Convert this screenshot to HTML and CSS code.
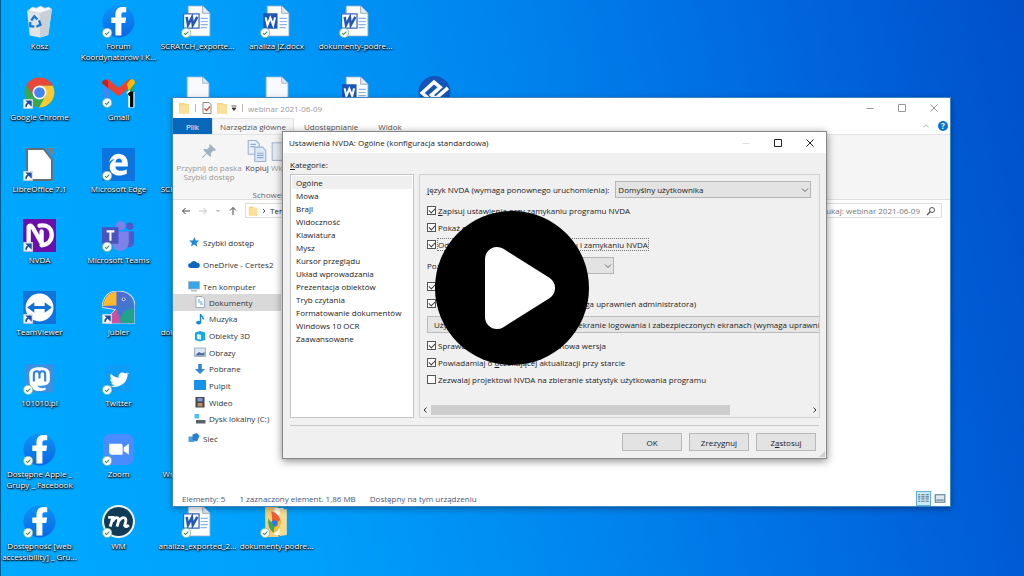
FILE: index.html
```html
<!DOCTYPE html>
<html lang="pl">
<head>
<meta charset="utf-8">
<title>webinar 2021-06-09</title>
<link rel="stylesheet" href="styles.css">
</head>
<body>
<svg class="defs" aria-hidden="true">
  <defs>
    <linearGradient id="g-fb" x1="0" y1="0" x2="0" y2="1"><stop offset="0" stop-color="#0a93f8"/><stop offset="1" stop-color="#0a68e6"/></linearGradient>
    <linearGradient id="g-parrot" x1="0" y1="0" x2="1" y2="1"><stop offset="0" stop-color="#5b62d8"/><stop offset="1" stop-color="#2f86c8"/></linearGradient>
    <symbol id="ok" viewBox="0 0 10 10"><circle cx="5" cy="5" r="4.5" fill="#fff" stroke="#7db98c" stroke-width=".8"/><path d="M3 5.2l1.4 1.4L7.1 3.8" fill="none" stroke="#2f8f4a" stroke-width="1"/></symbol>
    <symbol id="link" viewBox="0 0 10 10"><path d="M.5.5h9v9h-9z" fill="#f4f6f9" stroke="#c5ccd5" stroke-width=".6"/><path d="M3 8.200c-.4-2.600.6-4 2.600-4.200M3.800 2.300h4v4z" fill="#1d4f9f" stroke="#1d4f9f" stroke-width="1.300"/></symbol>
    <symbol id="fb" viewBox="0 0 32 32"><circle cx="16" cy="16" r="15.500" fill="url(#g-fb)"/><path d="M13 29.500V17.500H9V12h4V9.500C13 4.500 15.500 2 20 2c1.600 0 2.800.2 3.500.3v4.700h-2.400c-1.800 0-2.300 1-2.300 2.300V12h4.600l-.8 5.500h-3.800v12z" fill="#fff"/></symbol>
    <symbol id="word" viewBox="0 0 32 32"><path d="M7 1h14l7 7v22H7z" fill="#fdfeff" stroke="#aab7c6" stroke-width=".8"/><path d="M21 1v7h7" fill="#e4eaf1" stroke="#8d9caf" stroke-width=".8"/><path d="M19 13h7M19 16h7M19 19h7M19 22h6" stroke="#8eb0e2" stroke-width="1.200"/></symbol>
    <symbol id="word-old" viewBox="0 0 32 32"><use href="#word"/><path d="M2.500 8.500h15v14h-15z" fill="#fff" stroke="#3568c0" stroke-width="1.200"/><path d="M5.500 11.500l1.300 8 3.800-7.500.8 7.500 4.400-8" fill="none" stroke="#2558b5" stroke-width="2.400"/></symbol>
    <symbol id="word-new" viewBox="0 0 32 32"><use href="#word"/><path d="M3 8h14v15H3z" fill="#1b55b5"/><path d="M5.500 12l1.700 7.500L10 12.500l2.800 7L14.600 12" fill="none" stroke="#fff" stroke-width="2"/></symbol>
    <symbol id="blank" viewBox="0 0 32 32"><path d="M6 1h15l6 6v24H6z" fill="#f8fafd" stroke="#b3c4d6" stroke-width=".8"/><path d="M21 1v6h6" fill="#dfe7f0" stroke="#9aabbe" stroke-width=".8"/></symbol>
    <symbol id="folder" viewBox="0 0 12 12"><path d="M1 1h5l1 1h4v9.500H1z" fill="#f5d272"/><path d="M2.500 2.500H11V11.500H1z" fill="#fbe09a"/></symbol>
  </defs>
</svg>

<main class="desktop">
  <ul class="icons">
    <li class="tile c1 r1"><svg viewBox="0 0 32 32"><path d="M4 6l24-2-3.500 25-8 2.500-10-2z" fill="#dfe4e8"/><path d="M16 8l12-4-3.500 25-8 2.500z" fill="#c9d0d7"/><path d="M4 6l5-4 4 1 4-2 4 2 4-1 3 2-11 4z" fill="#f6f8fa" stroke="#b9c3cc" stroke-width=".6"/><path d="M8 15l3-4 3 3M15.500 15l1.500 4-4 2M11 21l-4-.5L7 16.500" fill="none" stroke="#1976d2" stroke-width="2.200"/></svg><span>Kosz</span></li>
    <li class="tile c1 r2"><svg viewBox="0 0 32 32"><circle cx="16" cy="16" r="14.500" fill="#34a853"/><path d="M16 16L3.400 8.700A14.500 14.500 0 0 1 28.600 8.700L29 9.500H16z" fill="#e8473a"/><path d="M16 9.500h12.900A14.500 14.500 0 0 1 15.500 30.500L22 19z" fill="#fbc934"/><path d="M3.400 8.700L10 19.500l6-10z" fill="#e8473a"/><circle cx="16" cy="16" r="6.700" fill="#fff"/><circle cx="16" cy="16" r="5.200" fill="#4285f4"/><use href="#link" x="0" y="22" width="10" height="10"/></svg><span>Google Chrome</span></li>
    <li class="tile c1 r3"><svg viewBox="0 0 32 32"><path d="M22 0h7v8z" fill="#777f88"/><path d="M4 1h16l8 10v20H4z" fill="#fff" stroke="#666c73" stroke-width="1.800"/><use href="#link" x="0" y="22" width="10" height="10"/></svg><span>LibreOffice 7.1</span></li>
    <li class="tile c1 r4"><svg viewBox="0 0 32 32"><path d="M0 0h32v32H0z" fill="#6c0fa8"/><path d="M5.500 26V7.500Q7 5 9.500 8.500L18 23.500V12M16 6.500C31 3 32 25 18 25.500" fill="none" stroke="#fff" stroke-width="4.200" stroke-linejoin="round" stroke-linecap="round"/><use href="#link" x="0" y="22" width="10" height="10"/></svg><span>NVDA</span></li>
    <li class="tile c1 r5"><svg viewBox="0 0 32 32"><path d="M0 0h32v32H0z" fill="#0e74dc"/><circle cx="16" cy="16" r="13.500" fill="#fff"/><path d="M4 16l7-5v3.500h10V11l7 5-7 5v-3.500H11V21z" fill="#1271d6"/><use href="#link" x="0" y="22" width="10" height="10"/></svg><span>TeamViewer</span></li>
    <li class="tile c1 r6"><svg viewBox="0 0 32 32"><path d="M2.500 2.500h27v27h-27z" fill="#3f8fe0"/><path d="M6 12c0-5 3-7 10-7s10 2 10 7v5c0 4-3 6-8 6h-4c1 2 4 3 8 2v2c-8 3-14 0-15.500-6z" fill="#fff"/><path d="M10.500 19v-7c0-4 5.500-4 5.500 0v4-4c0-4 5.500-4 5.500 0v7" fill="none" stroke="#3180d8" stroke-width="2"/><use href="#ok" x="0" y="22" width="10" height="10"/></svg><span>101010.pl</span></li>
    <li class="tile c1 r7"><svg viewBox="0 0 32 32"><use href="#fb"/><use href="#ok" x="0" y="22" width="10" height="10"/></svg><span>Dostępne Apple _<br>Grupy _ Facebook</span></li>
    <li class="tile c1 r8"><svg viewBox="0 0 32 32"><use href="#fb"/><use href="#ok" x="0" y="22" width="10" height="10"/></svg><span>Dostępność [web<br>accessibility] _ Gru...</span></li>

    <li class="tile c2 r1"><svg viewBox="0 0 32 32"><use href="#fb"/><use href="#ok" x="0" y="22" width="10" height="10"/></svg><span>Forum<br>Koordynatorów i K...</span></li>
    <li class="tile c2 r2"><svg viewBox="0 0 32 32"><path d="M1 6v20h6V12z" fill="#4285f4"/><path d="M31 6v18h-6V12z" fill="#34a853"/><path d="M3 5L16 15.500 29 5" fill="none" stroke="#ea4335" stroke-width="6.500"/><path d="M24 8l3-4c3-2 5 0 5 3l-6 7z" fill="#fbbc04"/><path d="M0 7c0-3 3-5 6-2v7z" fill="#c5221f"/><path d="M28.500 15.500v15M25.500 18.500l3-2.500" stroke="#fff" stroke-width="6"/><path d="M28.800 15v15M25.800 18.500l3-2.500" stroke="#000" stroke-width="3.200"/><use href="#ok" x="0" y="21" width="10" height="10"/></svg><span>Gmail</span></li>
    <li class="tile c2 r3"><svg viewBox="0 0 32 32"><path d="M0 0h32v32H0z" fill="#0b74de"/><path d="M7 14C9 2 25 3 25 15v3H13c0 5 7 5 11 2.500v4.500C16 29 7 26 7.500 18c.4-4 3-6 5-7-3 0-4.500 1.500-5.500 3zm6 0h6.500c0-5-6-5-6.500 0z" fill="#fff"/><use href="#ok" x="0" y="22" width="10" height="10"/></svg><span>Microsoft Edge</span></li>
    <li class="tile c2 r4"><svg viewBox="0 0 32 32"><circle cx="18" cy="6.500" r="4.500" fill="#7b83eb"/><circle cx="27" cy="7" r="3.500" fill="#5059c9"/><path d="M22 12h9v10c0 5-4 6-8 5z" fill="#5059c9"/><path d="M10 12h16v10c0 12-16 11-16 2z" fill="#7b83eb"/><path d="M0 8h16v16H0z" fill="#4b53bc"/><path d="M4.500 12h7.500M8.200 12v9" stroke="#fff" stroke-width="2"/><use href="#ok" x="0" y="22" width="10" height="10"/></svg><span>Microsoft Teams</span></li>
    <li class="tile c2 r5"><svg viewBox="0 0 32 32"><path d="M0 15C1 5 7 0 15 0c11 0 17 6 17 15v17H5c0-9 5-10 8-14L1 16z" fill="url(#g-parrot)" stroke="#d5e5f5" stroke-width="1"/><path d="M1 14.500C2 6 7 1 14 1v13z" fill="#fdb92e"/><path d="M14 18l5 13H6c0-8 4-9 8-13z" fill="#cc4fa6"/><path d="M18 31c-2-8 4-13 13-14v14z" fill="#1fa48b"/><circle cx="21" cy="8" r="1.800" fill="#dfe7ff"/><circle cx="21" cy="8" r=".9" fill="#222"/><use href="#link" x="0" y="22" width="10" height="10"/></svg><span>Jubler</span></li>
    <li class="tile c2 r6"><svg viewBox="0 0 32 32"><path d="M3 3h26v26H3z" fill="#0f9cf6"/><path d="M25 10.500c0 9-6 15-17 13.500 2.500-.2 3.500-.8 4.500-1.600-2 0-3.200-1.200-3.500-2.400h1.500C8.500 19.500 8 17.500 8 16.500l1.500.4C8 15.500 7.600 13 8.600 11.500c2 2.300 4.500 3.600 7.500 3.700-.6-4.500 3.900-6.500 6.400-4l2.500-.9-1 1.700 2.200-.6z" fill="#fff"/><use href="#ok" x="0" y="22" width="10" height="10"/></svg><span>Twitter</span></li>
    <li class="tile c2 r7"><svg viewBox="0 0 32 32"><rect x="1" y="1" width="30" height="30" rx="7" fill="#4a8cff"/><path d="M7 10.500h11q2 0 2 2v8.500H9q-2 0-2-2zM21 14l5-3.500v10.500l-5-3.500z" fill="#fff"/><use href="#ok" x="0" y="22" width="10" height="10"/></svg><span>Zoom</span></li>
    <li class="tile c2 r8"><svg viewBox="0 0 32 32"><circle cx="16" cy="16" r="16" fill="#eaf3f7"/><circle cx="16" cy="16" r="14" fill="#103a55"/><path d="M6 12h4.500L8 21M10 16c3-5 7-5 6 0l-1.500 5M16 16c3-5 8-5 7 0l-1 4q1 2 4-.5" fill="none" stroke="#fff" stroke-width="2.800"/><use href="#ok" x="0" y="22" width="10" height="10"/></svg><span>WM</span></li>

    <li class="tile c3 r1"><svg viewBox="0 0 32 32"><use href="#word-old"/><use href="#ok" x="0" y="22" width="10" height="10"/></svg><span>SCRATCH_exporte...</span></li>
    <li class="tile c4 r1"><svg viewBox="0 0 32 32"><use href="#word-new"/><use href="#ok" x="0" y="22" width="10" height="10"/></svg><span>analiza JZ.docx</span></li>
    <li class="tile c5 r1"><svg viewBox="0 0 32 32"><use href="#word-old"/><use href="#ok" x="0" y="22" width="10" height="10"/></svg><span>dokumenty-podre...</span></li>
    <li class="tile c3 r2"><svg viewBox="0 0 32 32"><use href="#blank"/></svg></li>
    <li class="tile c4 r2"><svg viewBox="0 0 32 32"><use href="#blank"/></svg></li>
    <li class="tile c5 r2"><svg viewBox="0 0 32 32"><use href="#word-new"/></svg></li>
    <li class="tile c6 r2"><svg viewBox="0 0 32 32"><circle cx="16" cy="15.500" r="15.500" fill="#1554b8"/><path d="M13 24L4 16.500 15.500 6l6 5-8.500 7.500 4 3.500 12-10.500" fill="none" stroke="#fff" stroke-width="3.400"/></svg></li>
    <li class="tile c3 r3"><svg viewBox="0 0 32 32"></svg><span>SCRATCH_exporte...</span></li>
    <li class="tile c3 r5"><svg viewBox="0 0 32 32"></svg><span>dokumenty-podre...</span></li>
    <li class="tile c3 r7 start"><svg viewBox="0 0 32 32"></svg><span>Wn</span></li>
    <li class="tile c3 r8"><svg viewBox="0 0 32 32"><use href="#word-old"/><use href="#ok" x="0" y="22" width="10" height="10"/></svg><span>analiza_exported_2...</span></li>
    <li class="tile c4 r8"><svg viewBox="0 0 32 32"><path d="M5 0h10l3 3v28H5z" fill="#f3cf75"/><path d="M14 3h9v26h-9z" fill="#fffdf5"/><path d="M19 4h7v25l-7 1z" fill="#f7dc93"/><path d="M11 6q9 3 9 11l-7 10z" fill="#ee5b35"/><path d="M20 14q1 9-6 13l-1-7z" fill="#f9bf2d"/><circle cx="14" cy="18" r="3.200" fill="#3478df"/><path d="M8 13q-1 9 5 14l1-6z" fill="#3da658"/><use href="#ok" x="0" y="22" width="10" height="10"/></svg><span>dokumenty-podre...</span></li>
  </ul>

  <section class="explorer" aria-label="webinar 2021-06-09">
    <header class="ex-title">
      <svg class="i12" viewBox="0 0 12 12"><use href="#folder"/></svg><i class="bar"></i>
      <svg class="i12" viewBox="0 0 12 12"><path d="M2 .5h6l2 2v9H2z" fill="#fff" stroke="#888"/><path d="M3.500 6.500l2 2 3.500-4" fill="none" stroke="#d8462f" stroke-width="1.300"/></svg>
      <svg class="i12" viewBox="0 0 12 12"><use href="#folder"/></svg>
      <svg class="i6" viewBox="0 0 6 6"><path d="M.5 1h5M1 3h4L3 5.500z" fill="#333" stroke="#333" stroke-width=".8"/></svg><i class="bar"></i>
      <span>webinar 2021-06-09</span>
      <div class="win-btns pale">
        <button aria-label="Minimalizuj"><svg viewBox="0 0 10 10"><path d="M1.500 5.500h7" /></svg></button>
        <button aria-label="Maksymalizuj"><svg viewBox="0 0 10 10"><path d="M1.500 1.500h7v7h-7z" /></svg></button>
        <button aria-label="Zamknij"><svg viewBox="0 0 10 10"><path d="M1.500 1.500l7 7M8.500 1.500l-7 7" /></svg></button>
      </div>
    </header>
    <nav class="tabs">
      <button class="file">Plik</button><button class="on">Narzędzia główne</button><button>Udostępnianie</button><button>Widok</button>
      <span class="help"><svg class="i6" viewBox="0 0 6 6"><path d="M.5 4L3 1.800 5.500 4" fill="none" stroke="#999" stroke-width=".8"/></svg><b>?</b></span>
    </nav>
    <div class="ribbon">
      <button class="pin"><svg viewBox="0 0 18 18"><path d="M10 1l7 7-2 1-1-.5-3 3 .5 3-1.500 1L6.500 12 2 17l-1-1 5-4.500L2.500 7.500 4 6.500l3 .5 3-3L9 3z" fill="#9fb1c2"/></svg><span>Przypnij do paska Szybki dostęp</span></button>
      <button class="copy"><svg viewBox="0 0 18 20"><path d="M1 .5h7l3 3V13H1z" fill="#e9f0f8" stroke="#9db3cc"/><path d="M7 6.500h7l3 3v10H7z" fill="#dce8f5" stroke="#9db3cc"/><path d="M3 4h5M3 6h4M9 12h6M9 14h6M9 16h6" stroke="#8fadd0"/></svg><span>Kopiuj</span></button>
      <button class="paste"><svg viewBox="0 0 18 20"><path d="M1 2.500h14v16H1z" fill="#e3eaf2" stroke="#a9b8c9"/></svg><span>Wklej</span></button>
      <span class="group">Schowek</span>
    </div>
    <div class="address">
      <svg viewBox="0 0 10 10"><path d="M9 5H1.500M4.500 2l-3 3 3 3" stroke="#444"/></svg>
      <svg viewBox="0 0 10 10"><path d="M1 5h7.500M5.500 2l3 3-3 3" stroke="#c4c4c4"/></svg>
      <svg class="tiny" viewBox="0 0 6 6"><path d="M1.500 2L3 3.500 4.500 2" stroke="#888"/></svg>
      <svg viewBox="0 0 10 10"><path d="M5 9V1.500M2 4.500l3-3 3 3" stroke="#444"/></svg>
      <div class="path"><svg class="i12" viewBox="0 0 12 12"><use href="#folder"/></svg><svg class="tiny" viewBox="0 0 6 6"><path d="M2 1l2 2-2 2" stroke="#555"/></svg><span>Ten komputer</span></div>
      <label class="search"><input type="text" aria-label="Przeszukaj" placeholder="Przeszukaj: webinar 2021-06-09"><svg viewBox="0 0 10 10"><circle cx="6" cy="4" r="2.500" stroke="#555"/><path d="M4.200 5.800L1 9" stroke="#555" stroke-width="1.300"/></svg></label>
    </div>
    <aside class="places">
      <a href="#"><svg viewBox="0 0 12 12"><path d="M6.500 1l1.200 3.400 3.800.2-3 2.300.8 3.900-3.200-2.200-3.300 2L4 7 1 4.500l3.800-.1z" fill="#1e88e0"/></svg>Szybki dostęp</a>
      <a href="#"><svg viewBox="0 0 12 12"><path d="M2.500 10a2.400 2.400 0 0 1 0-4.800A3.600 3.600 0 0 1 9 4.800 2.600 2.600 0 0 1 9.500 10z" fill="#0a64c0"/></svg>OneDrive - Certes2</a>
      <a href="#"><svg viewBox="0 0 12 12"><path d="M.5 1.500h11v7.500H.5z" fill="#37a7ea" stroke="#9fb4c3" stroke-width=".8"/><path d="M3 10.800h6" stroke="#8a9aa6"/></svg>Ten komputer</a>
      <div class="sub">
        <a href="#" class="on"><svg viewBox="0 0 12 12"><path d="M2 .5h6l2.500 2.500v8.500H2z" fill="#fff" stroke="#8e9db0" stroke-width=".8"/><path d="M4 4h2M4 6h4M6 8h3" stroke="#4a9fe0"/></svg>Dokumenty</a>
        <a href="#"><svg viewBox="0 0 12 12"><path d="M6.500 9.500V1c0 2 3.500 2.500 2.500 5.500" fill="none" stroke="#1487de" stroke-width="1.400"/><ellipse cx="4.600" cy="9.600" rx="2.500" ry="1.900" fill="#1487de"/></svg>Muzyka</a>
        <a href="#"><svg viewBox="0 0 12 12"><path d="M1 2.500l5-1.500 5 1.500V10l-5 1.500L1 10z" fill="#19a8df"/><path d="M3 4l4 .8v5L3 9z" fill="#d6f4fc"/></svg>Obiekty 3D</a>
        <a href="#"><svg viewBox="0 0 12 12"><path d="M.5 2h11v8.500H.5z" fill="#dbe7f4" stroke="#91a3b8" stroke-width=".8"/><path d="M1.500 9L5 6l3 1.500L10.500 6v3.500h-9z" fill="#496b9c"/></svg>Obrazy</a>
        <a href="#"><svg viewBox="0 0 12 12"><path d="M4.200 1h3.600v5H11l-5 5-5-5h3.200z" fill="#2e86d6"/></svg>Pobrane</a>
        <a href="#"><svg viewBox="0 0 12 12"><path d="M.5 1.500h11v9H.5z" fill="#1193ee" stroke="#0b76cc" stroke-width=".8"/></svg>Pulpit</a>
        <a href="#"><svg viewBox="0 0 12 12"><path d="M1.500 1h9v10.500h-9z" fill="#43464e"/><path d="M3.500 2h5v3.500h-5z" fill="#7f98d8"/><path d="M3.500 7h5v3.500h-5z" fill="#c28b5e"/></svg>Wideo</a>
        <a href="#"><svg viewBox="0 0 12 12"><path d="M.5 1h4.500v4.500H.5z" fill="#4fc0ee"/><path d="M2 7h9.500v3.500H2z" fill="#5a6269"/></svg>Dysk lokalny (C:)</a>
      </div>
      <a href="#"><svg viewBox="0 0 12 12"><path d="M.5 4.500h6V10h-6z" fill="#4aa3df"/><path d="M4.500 2.500L9 1l2.500 3L9 9.500 4.500 8z" fill="#2c7fc4"/></svg>Sieć</a>
    </aside>
    <footer class="status"><span>Elementy: 5</span><span>1 zaznaczony element. 1,86 MB</span><span>Dostępny na tym urządzeniu</span>
      <div class="views"><svg class="on" viewBox="0 0 14 14"><path d="M2 3.500h2M2 5.500h2M2 7.500h2M2 9.500h2M5 3.500h3M5 5.500h3M5 7.500h3M5 9.500h3M9 3.500h3M9 5.500h3M9 7.500h3M9 9.500h3"/></svg><svg viewBox="0 0 14 14"><path d="M3 3.500h9v7H3z" fill="#dbe8f2"/><path d="M4 8.500h7"/></svg></div>
    </footer>
  </section>

  <section class="dialog" role="dialog" aria-label="Ustawienia NVDA">
    <header class="dl-title"><span>Ustawienia NVDA: Ogólne (konfiguracja standardowa)</span>
      <div class="win-btns">
        <button class="off" aria-label="Minimalizuj"><svg viewBox="0 0 10 10"><path d="M1.500 5.500h7"/></svg></button>
        <button aria-label="Maksymalizuj"><svg viewBox="0 0 10 10"><path d="M1.500 1.500h7v7h-7z"/></svg></button>
        <button aria-label="Zamknij"><svg viewBox="0 0 10 10"><path d="M1.500 1.500l7 7M8.500 1.500l-7 7"/></svg></button>
      </div>
    </header>
    <div class="caption"><u>K</u>ategorie:</div>
    <div class="panes">
      <ul class="cats">
        <li class="on">Ogólne</li><li>Mowa</li><li>Brajl</li><li>Widoczność</li><li>Klawiatura</li><li>Mysz</li><li>Kursor przeglądu</li><li>Układ wprowadzania</li><li>Prezentacja obiektów</li><li>Tryb czytania</li><li>Formatowanie dokumentów</li><li>Windows 10 OCR</li><li>Zaawansowane</li>
      </ul>
      <form class="panel">
        <div class="fields">
          <div class="field"><label for="lang"><u>J</u>ęzyk NVDA (wymaga ponownego uruchomienia):</label><span class="drop lang"><select id="lang"><option>Domyślny użytkownika</option></select><svg viewBox="0 0 8 8"><path d="M1 2.500l3 3 3-3"/></svg></span></div>
          <div class="group-rows">
            <label><input type="checkbox" checked><span><u>Z</u>apisuj ustawienia przy zamykaniu programu NVDA</span></label>
            <label><input type="checkbox" checked><span>Pokaż opcje przy wyjściu z NVDA</span></label>
            <label><input type="checkbox" checked><span class="focus">Odtwarzaj dźwięki przy uruchamianiu i zamykaniu NVDA</span></label>
          </div>
          <div class="field log"><label for="log">Poziom logowania:</label><span class="drop"><select id="log"><option>informacje</option></select><svg viewBox="0 0 8 8"><path d="M1 2.500l3 3 3-3"/></svg></span></div>
          <div class="group-rows">
            <label><input type="checkbox" checked><span>Uruchamiaj po zalogowaniu</span></label>
            <label><input type="checkbox" checked><span>Użyj NVDA na ekranie logowania (wymaga uprawnień administratora)</span></label>
          </div>
          <button type="button" class="wide">Użyj aktualnie zapisanych ustawień na ekranie logowania i zabezpieczonych ekranach (wymaga uprawnień</button>
          <div class="group-rows">
            <label><input type="checkbox" checked><span>Sprawdzaj, czy jest już dostępna nowa wersja</span></label>
            <label><input type="checkbox" checked><span>Powiadamiaj o <u>o</u>czekującej aktualizacji przy starcie</span></label>
            <label><input type="checkbox"><span>Zezwalaj projektowi NVDA na zbieranie statystyk użytkowania programu</span></label>
          </div>
        </div>
        <div class="scroll"><svg viewBox="0 0 8 8"><path d="M5.500 1.500L3 4l2.500 2.500"/></svg><div class="track"><i></i></div><svg viewBox="0 0 8 8"><path d="M2.500 1.500L5 4 2.500 6.500"/></svg></div>
      </form>
    </div>
    <footer class="actions"><button>OK</button><button>Zrezygnuj</button><button>Z<u>a</u>stosuj</button></footer>
    <svg class="grip" viewBox="0 0 8 8"><path d="M8 1v7H1z" fill="#d0d0d0"/></svg>
  </section>

  <button class="play" aria-label="Odtwórz"><svg viewBox="0 0 154 154"><circle cx="77" cy="77" r="77"/><path d="M62 48v58l46-29z"/></svg></button>
</main>
</body>
</html>
```
FILE: styles.css
```css
* { box-sizing: border-box; }
body { margin: 0; font-family: "Open Sans", "Noto Sans", sans-serif; font-size: 8px; line-height: 11px; color: #222; }
ul { list-style: none; margin: 0; padding: 0; }
button, input, select { font: inherit; color: inherit; margin: 0; padding: 0; border: 0; background: none; border-radius: 0; }
a { color: inherit; text-decoration: none; }
svg { display: block; flex: none; }
.defs { position: absolute; width: 0; height: 0; }

.desktop { position: relative; height: 100vh; min-height: 560px; overflow: hidden; box-shadow: inset 1px 0 #0a5c96;
  background: linear-gradient(78deg, #00aaff 0%, #009ffb 28%, #0086ef 52%, #0065dc 80%, #0050ca 100%); }
.icons { display: grid; height: 100%; padding-top: 5px; grid-template-columns: repeat(6, 79px); grid-template-rows: repeat(8, 1fr); }
.tile { display: flex; flex-direction: column; align-items: center; gap: 2px; min-width: 0; color: #fff; text-align: center; white-space: nowrap; text-shadow: 0 1px 1px #000, 1px 1px 2px #000, 0 0 2px #0008; }
.tile svg { width: 33px; height: 33px; }
.start span { width: 70px; text-align: left; }
.c1 { grid-column: 1; } .c2 { grid-column: 2; } .c3 { grid-column: 3; } .c4 { grid-column: 4; } .c5 { grid-column: 5; } .c6 { grid-column: 6; }
.r1 { grid-row: 1; } .r2 { grid-row: 2; } .r3 { grid-row: 3; } .r4 { grid-row: 4; } .r5 { grid-row: 5; } .r6 { grid-row: 6; } .r7 { grid-row: 7; } .r8 { grid-row: 8; }

.explorer { position: absolute; left: 172px; top: 97px; right: 73px; bottom: 69px; display: flex; flex-direction: column; background: #fff; border: 1px solid #3d86c0; box-shadow: 0 2px 6px #0005; }
.i12 { width: 12px; height: 12px; }
.i6 { width: 6px; height: 6px; }
.ex-title { display: flex; align-items: center; height: 20px; padding-left: 5px; gap: 3px; color: #999; }
.bar { width: 1px; height: 8px; background: #bbb; margin: 0 2px; }
.win-btns { display: flex; margin-left: auto; }
.win-btns button { width: 32px; height: 20px; display: grid; place-items: center; }
.win-btns svg { width: 10px; height: 10px; fill: none; stroke: #222; }
.win-btns .off svg { stroke: #ddd; }
.pale svg { stroke: #999; }
.tabs { display: flex; height: 17px; border-bottom: 1px solid #e2e3e4; color: #555; }
.tabs button { padding: 0 10px; }
.tabs .file { width: 39px; padding: 0; background: #0767bb; color: #fff; }
.tabs .on { padding: 0 7px; background: #f5f6f7; border: 1px solid #e2e3e4; border-width: 1px 1px 0; }
.help { display: flex; align-items: center; gap: 9px; margin-left: auto; padding-right: 2px; }
.help b { width: 10px; height: 10px; border-radius: 50%; background: #0b74c8; color: #fff; line-height: 10px; text-align: center; }
.ribbon { display: grid; grid-template: 50px 1fr / 72px 24px 24px; height: 65px; padding-top: 5px; background: #f5f5f6; border-bottom: 1px solid #dedfe0; color: #999; }
.ribbon button { display: flex; flex-direction: column; align-items: center; gap: 1px; line-height: 9px; }
.ribbon svg { width: 20px; height: 22px; }
.ribbon .pin svg { width: 16px; }
.ribbon .copy { color: #444; }
.ribbon .group { grid-column: 2 / 4; text-align: center; line-height: 9px; color: #666; }
.address { display: flex; align-items: center; gap: 7px; height: 21px; padding: 0 8px; }
.address svg { width: 10px; height: 10px; fill: none; }
.address .tiny { width: 6px; height: 6px; }
.path { display: flex; align-items: center; gap: 3px; flex: 1; height: 15px; border: 1px solid #ddd; padding-left: 2px; white-space: nowrap; }
.search { display: flex; align-items: center; width: 160px; height: 15px; border: 1px solid #ddd; padding: 0 5px; }
.search input { flex: 1; min-width: 0; text-align: right; padding-right: 6px; color: #777; outline: 0; }
.search input::placeholder { color: #777; }
.places { flex: 1; width: 108px; padding-top: 10px; }
.places a { display: flex; align-items: center; gap: 3px; height: 22px; padding-left: 15px; white-space: nowrap; color: #333; }
.places svg { width: 12px; height: 12px; }
.sub { display: grid; grid-template-rows: repeat(8, 1fr); height: 133px; margin-top: -3px; }
.places .sub a { height: auto; padding-left: 21px; }
.places .sub .on { background: #d9d9d9; }
.status { display: flex; align-items: center; gap: 14px; height: 15px; padding-left: 9px; color: #44597a; }
.views { display: flex; margin-left: auto; padding-right: 3px; gap: 1px; }
.views svg { width: 15px; height: 15px; fill: none; stroke: #55758c; }
.views .on { background: #cce8f5; outline: 1px solid #5cb3d6; outline-offset: -1px; }

.dialog { position: absolute; left: 282px; top: 131px; right: 197px; bottom: 117px; display: flex; flex-direction: column; background: #f0f0f0; border: 1px solid #888; box-shadow: 0 2px 8px #0007; }
.dl-title { display: flex; align-items: center; height: 21px; padding-left: 6px; background: #fff; color: #222; }
.caption { padding: 6px 7px 4px; }
.panes { display: grid; grid-template-columns: 124px minmax(0, 1fr); gap: 5px; flex: 1; min-height: 0; margin: 0 6px 7px 7px; }
.cats { background: #fff; border: 1px solid #c4c4c4; padding: 1px; line-height: 13px; white-space: nowrap; }
.cats li { padding-left: 4px; }
.cats .on { background: #f0efef; }
.panel { display: flex; flex-direction: column; justify-content: space-between; border: 1px solid #d0d0d0; padding: 6px 0 1px 7px; overflow: hidden; }
.fields { display: flex; flex-direction: column; gap: 4px; white-space: nowrap; }
.field { display: flex; align-items: center; height: 17px; }
.field label { flex: none; }
.drop { position: relative; flex: 1; height: 17px; }
.drop.lang { margin: 0 8px 0 6px; }
.drop select { width: 100%; height: 100%; padding-left: 2px; appearance: none; background: #e3e3e3; border: 1px solid #b5b5b5; }
.drop svg { position: absolute; right: 2px; top: 5px; width: 8px; height: 8px; fill: none; stroke: #666; pointer-events: none; }
.log { width: 187px; gap: 6px; }
.group-rows label { display: flex; align-items: center; gap: 2px; height: 17px; }
input[type="checkbox"] { appearance: none; width: 9px; height: 9px; border: 1px solid #555; background: #fff; position: relative; }
input[type="checkbox"]:checked::after { content: ""; position: absolute; left: 1px; top: 1px; width: 5px; height: 3px; border: 1px solid #444; border-width: 0 0 1px 1px; transform: rotate(-45deg); }
.focus { outline: 1px dotted #777; }
.wide { height: 17px; padding: 0 6px; background: #e5e5e5; border: 1px solid #bbb; text-align: left; align-self: flex-start; }
.scroll { display: flex; align-items: center; height: 12px; margin-left: -6px; gap: 2px; }
.scroll svg { width: 8px; height: 8px; fill: none; stroke: #333; }
.track { flex: 1; height: 10px; }
.track i { display: block; width: 79%; height: 100%; background: #cdcdcd; }
.actions { display: flex; justify-content: flex-end; gap: 7px; margin: 0 7px; padding: 7px 3px; border-top: 1px solid #c8c8c8; }
.actions button { width: 60px; height: 18px; background: #e3e3e3; border: 1px solid #b8b8b8; }
.grip { position: absolute; right: 1px; bottom: 1px; width: 7px; height: 7px; }

.play { position: absolute; inset: 0; width: 154px; height: 154px; margin: auto; }
.play svg { width: 154px; height: 154px; }
.play path { fill: #fff; stroke: #fff; stroke-width: 24px; stroke-linejoin: round; }
```
